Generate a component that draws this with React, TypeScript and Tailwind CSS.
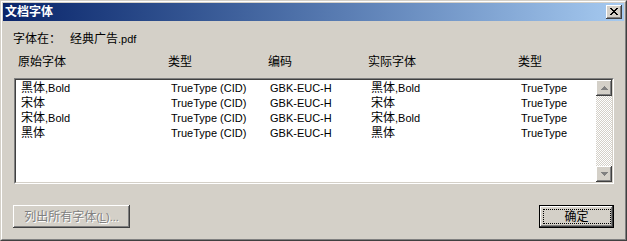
import React from "react";

const CJK = /([\u3000-\u9fff\uff00-\uffef]+)/;

function T({ s }: { s: string }) {
  const parts = s.split(CJK);
  return (
    <>
      {parts.map((p, i) =>
        p === "" ? null : i % 2 === 1 ? (
          <span key={i} className="text-[12px]">
            {p}
          </span>
        ) : (
          <span key={i}>{p}</span>
        )
      )}
    </>
  );
}

const rows = [
  ["黑体,Bold", "TrueType (CID)", "GBK-EUC-H", "黑体,Bold", "TrueType"],
  ["宋体", "TrueType (CID)", "GBK-EUC-H", "宋体", "TrueType"],
  ["宋体,Bold", "TrueType (CID)", "GBK-EUC-H", "宋体,Bold", "TrueType"],
  ["黑体", "TrueType (CID)", "GBK-EUC-H", "黑体", "TrueType"],
];

const raised =
  "shadow-[inset_-1px_-1px_#404040,inset_1px_1px_#ffffff,inset_-2px_-2px_#808080]";

function CloseGlyph() {
  const px = [
    "XX....XX",
    ".XX..XX.",
    "..XXXX..",
    "...XX...",
    "..XXXX..",
    ".XX..XX.",
    "XX....XX",
  ];
  return (
    <svg width="8" height="7" viewBox="0 0 8 7" shapeRendering="crispEdges">
      {px.flatMap((r, y) =>
        r.split("").map((c, x) =>
          c === "X" ? <rect key={`${x}-${y}`} x={x} y={y} width="1" height="1" fill="#000" /> : null
        )
      )}
    </svg>
  );
}

function Arrow({ up }: { up: boolean }) {
  return (
    <svg width="7" height="4" viewBox="0 0 7 4" shapeRendering="crispEdges">
      {[0, 1, 2, 3].map((i) => {
        const row = up ? i : 3 - i;
        return <rect key={i} x={3 - i} y={row} width={2 * i + 1} height="1" fill="#808080" />;
      })}
    </svg>
  );
}

function ScrollBtn({ up }: { up: boolean }) {
  return (
    <div className={`w-[16px] h-[16px] bg-[#d4d0c8] flex items-center justify-center ${raised}`}>
      <Arrow up={up} />
    </div>
  );
}

export default function App() {
  return (
    <div className="w-[627px] h-[241px] border border-t-[#d4d0c8] border-l-[#d4d0c8] border-r-[#404040] border-b-[#404040] bg-[#d4d0c8] font-['Liberation_Sans','Noto_Sans_CJK_SC',sans-serif] text-[11px] text-black">
      <div className="h-full border border-t-white border-l-white border-r-[#808080] border-b-[#808080] p-px flex flex-col">
        {/* Title bar */}
        <div className="h-[18px] shrink-0 bg-linear-to-r from-[#0a246a] to-[#a6caf0] flex items-center pl-[2px] pr-[2px]">
          <span className="text-white font-bold text-[12px] leading-[18px]">文档字体</span>
          <div className={`ml-auto w-[16px] h-[14px] bg-[#d4d0c8] flex items-center justify-center ${raised}`}>
            <div className="-mt-px">
              <CloseGlyph />
            </div>
          </div>
        </div>

        {/* Body */}
        <div className="flex-1 flex flex-col pl-[11px] pr-[10px]">
          <div className="mt-[11px] h-[15px] leading-[15px] flex -ml-px">
            <div className="w-[57px]">
              <T s="字体在：" />
            </div>
            <div>
              <T s="经典广告.pdf" />
            </div>
          </div>

          <div className="mt-[8px] h-[15px] leading-[15px] grid grid-cols-[150px_100px_100px_150px_1fr] pl-[4px]">
            {["原始字体", "类型", "编码", "实际字体", "类型"].map((h, i) => (
              <div key={i}>
                <T s={h} />
              </div>
            ))}
          </div>

          {/* List box */}
          <div className="mt-[8px] h-[106px] border border-t-[#808080] border-l-[#808080] border-r-white border-b-white">
            <div className="h-full border border-t-[#404040] border-l-[#404040] border-r-[#d4d0c8] border-b-[#d4d0c8] bg-white flex">
              <div className="flex-1 pt-px">
                {rows.map((r, i) => (
                  <div
                    key={i}
                    className="grid grid-cols-[150px_99px_101px_150px_1fr] pl-[5px] h-[15px] leading-[15px] whitespace-nowrap"
                  >
                    {r.map((c, j) => (
                      <div key={j}>
                        <T s={c} />
                      </div>
                    ))}
                  </div>
                ))}
              </div>
              <div className="w-[16px] flex flex-col">
                <ScrollBtn up />
                <div className="flex-1 bg-[repeating-conic-gradient(#d4d0c8_0_25%,#ffffff_0_50%)] bg-[length:2px_2px]" />
                <ScrollBtn up={false} />
              </div>
            </div>
          </div>

          {/* Buttons */}
          <div className="mt-[21px] flex justify-between">
            <div
              className={`-ml-px w-[117px] h-[23px] flex items-center justify-center text-[#808080] [text-shadow:1px_1px_0_#ffffff] ${raised}`}
            >
              <span>
                <T s="列出所有字体(" />
                <span className="underline">L</span>
                <span>)...</span>
              </span>
            </div>
            <div className="w-[75px] h-[23px] border border-black">
              <div className="relative h-full flex items-center justify-center shadow-[inset_-1px_-1px_#404040,inset_1px_1px_#ffffff,inset_-2px_-2px_#808080]">
                <div className="absolute left-[3px] top-[3px] right-[2px] bottom-[3px] border border-dotted border-black" />
                <T s="确定" />
              </div>
            </div>
          </div>
        </div>
      </div>
    </div>
  );
}
